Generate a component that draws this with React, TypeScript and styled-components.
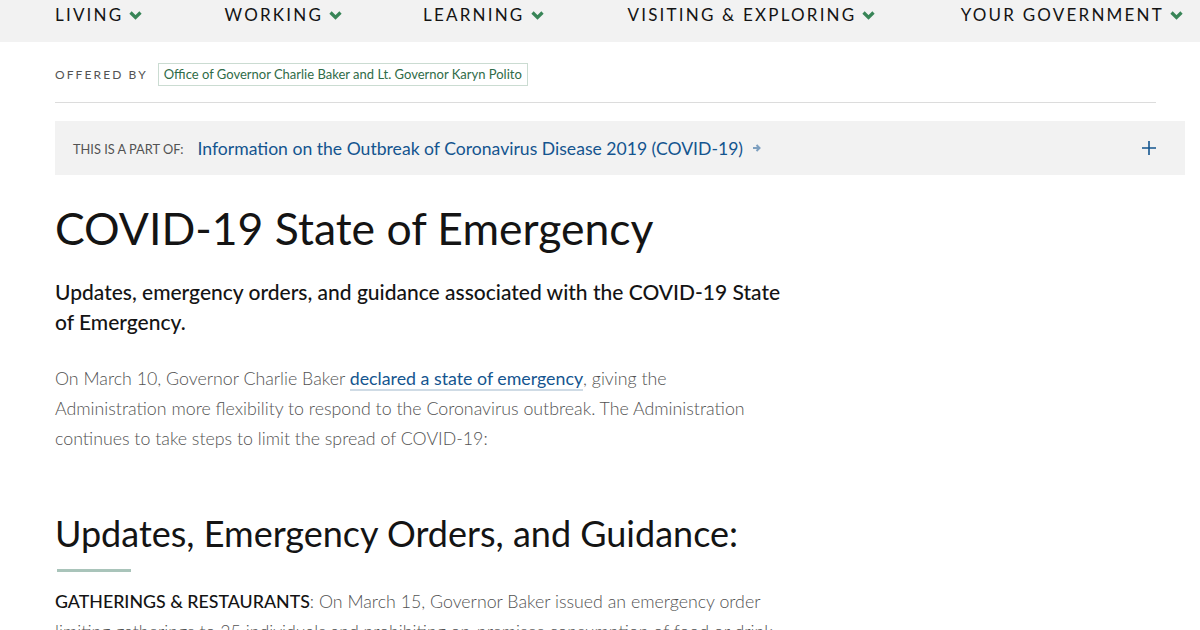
import React from 'react';
import styled, { createGlobalStyle } from 'styled-components';

const GlobalStyle = createGlobalStyle`
  html, body {
    margin: 0;
    padding: 0;
    background: #fff;
    font-family: Lato, "Noto Sans", sans-serif;
  }
`;

const Page = styled.div`
  width: 1200px;
  height: 630px;
  overflow: hidden;
`;

const NavBar = styled.nav`
  height: 42px;
  background: #f2f2f2;
  display: flex;
  align-items: flex-start;
  padding: 4px 0 0 55px;
  box-sizing: border-box;
`;

const NavItem = styled.a<{ $w: number }>`
  width: ${(p) => p.$w}px;
  display: flex;
  align-items: center;
  gap: 6px;
  font-size: 17px;
  letter-spacing: 2.2px;
  color: #141414;
  text-transform: uppercase;
  white-space: nowrap;
  text-decoration: none;
`;

const Chevron = () => (
  <svg width="13" height="10" viewBox="0 0 13 10">
    <path d="M1.5 2.5 L6.5 7.5 L11.5 2.5" stroke="#388557" strokeWidth="3.2" fill="none" />
  </svg>
);

const Main = styled.main`
  padding: 0 15px 0 55px;
`;

const OfferedRow = styled.div`
  display: flex;
  align-items: center;
  gap: 10px;
  padding: 21px 0 16px;
  border-bottom: 1px solid #dcdcdc;
  margin-right: 29px;
`;

const OfferedLabel = styled.span`
  font-size: 12px;
  letter-spacing: 2.1px;
  color: #535353;
  text-transform: uppercase;
`;

const OrgTag = styled.a`
  border: 1px solid #cbdcd2;
  padding: 2px 5px 3px;
  font-size: 13px;
  color: #2f6b48;
  text-decoration: none;
`;

const PartOfBar = styled.div`
  margin-top: 18px;
  height: 54px;
  background: #f2f2f2;
  display: flex;
  align-items: center;
  padding: 0 28px 0 18px;
`;

const PartOfLabel = styled.span`
  font-size: 12.8px;
  color: #535353;
  text-transform: uppercase;
  margin-right: 14px;
  margin-top: 2px;
`;

const PartOfLink = styled.a`
  font-size: 17.6px;
  color: #14558f;
  text-decoration: none;
  display: flex;
  align-items: center;
  gap: 9px;
`;

const Plus = styled.span`
  margin-left: auto;
  display: flex;
`;

const Content = styled.div`
  width: 760px;
`;

const Title = styled.h1`
  margin: 27px 0 0;
  font-size: 44.5px;
  font-weight: 400;
  color: #141414;
  line-height: 52px;
`;

const Lede = styled.p`
  margin: 23px 0 0;
  font-size: 21px;
  font-weight: 500;
  line-height: 30px;
  color: #141414;
`;

const Body = styled.p`
  margin: 26px 0 0;
  font-size: 17.8px;
  font-weight: 300;
  line-height: 30px;
  color: #535353;
`;

const InlineLink = styled.a`
  color: #14558f;
  font-weight: 400;
  text-decoration: none;
  border-bottom: 2px solid #cfdbe5;
`;

const SectionTitle = styled.h2`
  margin: 59px 0 0;
  font-size: 36px;
  font-weight: 400;
  color: #141414;
  line-height: 42px;
`;

const Rule = styled.div`
  width: 74px;
  height: 3px;
  background: #a9c4ba;
  margin: 15px 0 0 2px;
`;

const Label = styled.strong`
  font-weight: 500;
  color: #141414;
`;

const Item = styled.p`
  margin: 14px 0 0;
  font-size: 17.8px;
  font-weight: 300;
  line-height: 30px;
  color: #535353;
  width: 800px;
  white-space: nowrap;
`;

const navItems: [string, number][] = [
  ['Living', 170],
  ['Working', 199],
  ['Learning', 205],
  ['Visiting & Exploring', 334],
  ['Your Government', 240],
];

export default function App() {
  return (
    <Page>
      <GlobalStyle />
      <NavBar>
        {navItems.map(([label, w]) => (
          <NavItem key={label} $w={w}>
            {label}
            <Chevron />
          </NavItem>
        ))}
      </NavBar>
      <Main>
        <OfferedRow>
          <OfferedLabel>Offered by</OfferedLabel>
          <OrgTag>Office of Governor Charlie Baker and Lt. Governor Karyn Polito</OrgTag>
        </OfferedRow>
        <PartOfBar>
          <PartOfLabel>This is a part of:</PartOfLabel>
          <PartOfLink>
            Information on the Outbreak of Coronavirus Disease 2019 (COVID-19)
            <svg width="10" height="10" viewBox="0 0 10 10">
              <path d="M1 5 H7 M4.5 2 L7.5 5 L4.5 8" stroke="#7d9fbf" strokeWidth="2" fill="none" />
            </svg>
          </PartOfLink>
          <Plus>
            <svg width="16" height="16" viewBox="0 0 16 16">
              <path d="M8 1 V15 M1 8 H15" stroke="#14558f" strokeWidth="1.6" />
            </svg>
          </Plus>
        </PartOfBar>
        <Content>
          <Title>COVID-19 State of Emergency</Title>
          <Lede>
            Updates, emergency orders, and guidance associated with the COVID-19 State
            <br />
            of Emergency.
          </Lede>
          <Body>
            On March 10, Governor Charlie Baker <InlineLink>declared a state of emergency</InlineLink>, giving the
            <br />
            Administration more flexibility to respond to the Coronavirus outbreak. The Administration
            <br />
            continues to take steps to limit the spread of COVID-19:
          </Body>
          <SectionTitle>Updates, Emergency Orders, and Guidance:</SectionTitle>
          <Rule />
          <Item>
            <Label>GATHERINGS &amp; RESTAURANTS</Label>: On March 15, Governor Baker issued an emergency order
            <br />
            limiting gatherings to 25 individuals and prohibiting on-premises consumption of food or drink
          </Item>
        </Content>
      </Main>
    </Page>
  );
}
